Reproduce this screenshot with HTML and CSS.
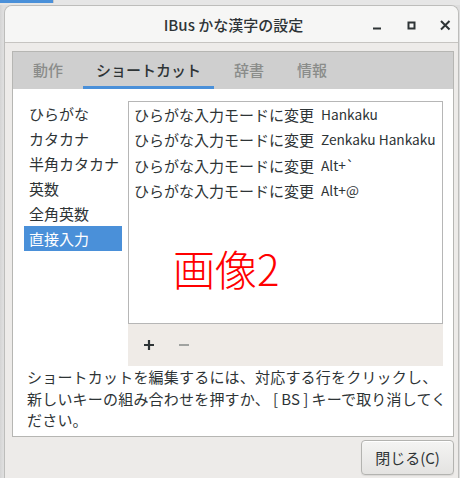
FILE: index.html
```html
<!DOCTYPE html>
<html lang="ja">
<head>
<meta charset="utf-8">
<title>IBus かな漢字の設定</title>
<link rel="stylesheet" href="styles.css">
</head>
<body>
<div class="desktop">
  <div class="topstrip"><div class="blue"></div></div>
  <div class="window">
    <header class="titlebar">
      <div class="spacer"></div>
      <div class="title">IBus かな漢字の設定</div>
      <div class="controls">
        <span class="wbtn"><svg width="16" height="16" viewBox="0 0 16 16"><line x1="4" y1="11.5" x2="12" y2="11.5" stroke="#2e3436" stroke-width="2"/></svg></span>
        <span class="wbtn"><svg width="16" height="16" viewBox="0 0 16 16"><rect x="5.5" y="5.5" width="6" height="6" fill="none" stroke="#2e3436" stroke-width="2"/></svg></span>
        <span class="wbtn"><svg width="16" height="16" viewBox="0 0 16 16"><path d="M4 4 L12.5 12.5 M12.5 4 L4 12.5" stroke="#2e3436" stroke-width="2"/></svg></span>
      </div>
    </header>
    <div class="content">
      <div class="notebook">
        <div class="tabs">
          <div class="tab">動作</div>
          <div class="tab active">ショートカット</div>
          <div class="tab">辞書</div>
          <div class="tab">情報</div>
        </div>
        <div class="page">
          <div class="panes">
            <ul class="modes">
              <li>ひらがな</li>
              <li>カタカナ</li>
              <li>半角カタカナ</li>
              <li>英数</li>
              <li>全角英数</li>
              <li class="selected">直接入力</li>
            </ul>
            <div class="shortcuts">
              <div class="tree">
                <div class="row"><span class="cmd">ひらがな入力モードに変更</span><span class="key">Hankaku</span></div>
                <div class="row"><span class="cmd">ひらがな入力モードに変更</span><span class="key">Zenkaku Hankaku</span></div>
                <div class="row"><span class="cmd">ひらがな入力モードに変更</span><span class="key">Alt+`</span></div>
                <div class="row"><span class="cmd">ひらがな入力モードに変更</span><span class="key">Alt+@</span></div>
                <div class="watermark">画像2</div>
              </div>
              <div class="toolbar">
                <span class="tbtn"><svg width="16" height="16" viewBox="0 0 16 16"><path d="M3 8 H13 M8 3 V13" stroke="#2e3436" stroke-width="2.2"/></svg></span>
                <span class="tbtn"><svg width="16" height="16" viewBox="0 0 16 16"><path d="M3 8 H13" stroke="#a0a2a0" stroke-width="2.2"/></svg></span>
              </div>
            </div>
          </div>
          <p class="help">ショートカットを編集するには、対応する行をクリックし、<br>新しいキーの組み合わせを押すか、<span class="br">[</span>BS<span class="br">]</span>キーで取り消してく<br>ださい。</p>
        </div>
      </div>
      <div class="actions"><button class="close">閉じる(C)</button></div>
    </div>
  </div>
</div>
</body>
</html>
```

FILE: styles.css
```css
html, body {
  margin: 0;
  padding: 0;
  background: #d9d9d9;
}
body {
  width: 460px;
  height: 478px;
  overflow: hidden;
  font-family: "Noto Sans CJK JP", sans-serif;
  font-size: 15px;
  color: #2e3436;
}
.desktop {
  height: 478px;
  display: flex;
  flex-direction: column;
  background: linear-gradient(to right, #d4d4d4, #dedede 3px);
}
.topstrip {
  height: 5px;
  background: #e6e6e6;
  display: flex;
  align-items: flex-start;
}
.blue {
  width: 53px;
  height: 3px;
  background: #4a90d9;
  border-right: 1px solid #c8c8c8;
}
.window {
  margin-left: 4px;
  width: 455px;
  box-sizing: border-box;
  flex: 1;
  display: flex;
  flex-direction: column;
  background: #edebe9;
  border: 1px solid #bdbdbb;
  border-bottom: none;
  border-radius: 8px 8px 0 0;
  overflow: hidden;
}
.titlebar {
  height: 36px;
  flex: none;
  display: grid;
  grid-template-columns: 1fr auto 1fr;
  align-items: center;
  background: #f6f6f5;
  border-bottom: 1px solid #c6c4c1;
}
.title {
  font-size: 15px;
  font-weight: 500;
  color: #2e3436;
  padding-left: 4px;
}
.controls {
  display: flex;
  justify-content: flex-end;
  gap: 18px;
  padding-right: 5px;
  padding-top: 1px;
}
.wbtn {
  width: 16px;
  height: 16px;
  display: block;
}
.wbtn svg { display: block; }
.content {
  flex: 1;
  padding: 8px 0 0 7px;
}
.notebook {
  width: 442px;
  box-sizing: border-box;
  border: 1px solid #b6b6b3;
  background: #ffffff;
}
.tabs {
  height: 37px;
  background: #cfcfcf;
  display: flex;
  gap: 7px;
  padding-left: 7px;
}
.tab {
  padding: 0 13px;
  display: flex;
  align-items: center;
  font-weight: 500;
  color: #8a8c8a;
  box-sizing: border-box;
  border-bottom: 3px solid transparent;
  padding-top: 1px;
}
.tab.active {
  color: #2e3436;
  border-bottom-color: #4a90d9;
}
.page {
  padding: 12px 9px 0 11px;
}
.panes {
  display: flex;
  gap: 6px;
}
.modes {
  list-style: none;
  margin: 0;
  padding: 0;
  width: 98px;
}
.modes li {
  height: 25px;
  line-height: 25px;
  padding-left: 5px;
}
.modes li.selected {
  background: #4a90d9;
  color: #ffffff;
}
.shortcuts {
  width: 315px;
}
.tree {
  position: relative;
  height: 223px;
  box-sizing: border-box;
  border: 1px solid #b6b6b6;
  background: #ffffff;
}
.row {
  display: grid;
  grid-template-columns: 192px 1fr;
  height: 25.3px;
  line-height: 25.3px;
  white-space: nowrap;
}
.cmd { padding-left: 5px; }
.key { font-size: 13.7px; }
.watermark {
  position: absolute;
  left: 44px;
  top: 145px;
  font-size: 42px;
  line-height: 42px;
  color: #ff0000;
  font-weight: 300;
}
.toolbar {
  height: 42px;
  background: #efebe7;
  display: flex;
  align-items: center;
  gap: 19px;
  padding-left: 13px;
}
.tbtn { display: block; width: 16px; height: 16px; }
.tbtn svg { display: block; }
.help {
  margin: 0;
  height: 70px;
  line-height: 21.5px;
  padding-left: 3px;
  letter-spacing: 0.2px;
  color: #2e3436;
  white-space: nowrap;
}
.br {
  margin: 0 3px;
}
.actions {
  width: 442px;
  display: flex;
  justify-content: flex-end;
  padding-top: 3px;
}
.close {
  width: 93px;
  height: 35px;
  font-family: "Noto Sans CJK JP", sans-serif;
  font-size: 15px;
  color: #2e3436;
  border: 1px solid #b3b3b0;
  border-radius: 4px;
  background: linear-gradient(#f4f4f3, #e4e3e1);
  box-shadow: inset 0 1px #ffffff, 0 1px 1px rgba(0,0,0,0.08);
  padding: 0;
}
```
